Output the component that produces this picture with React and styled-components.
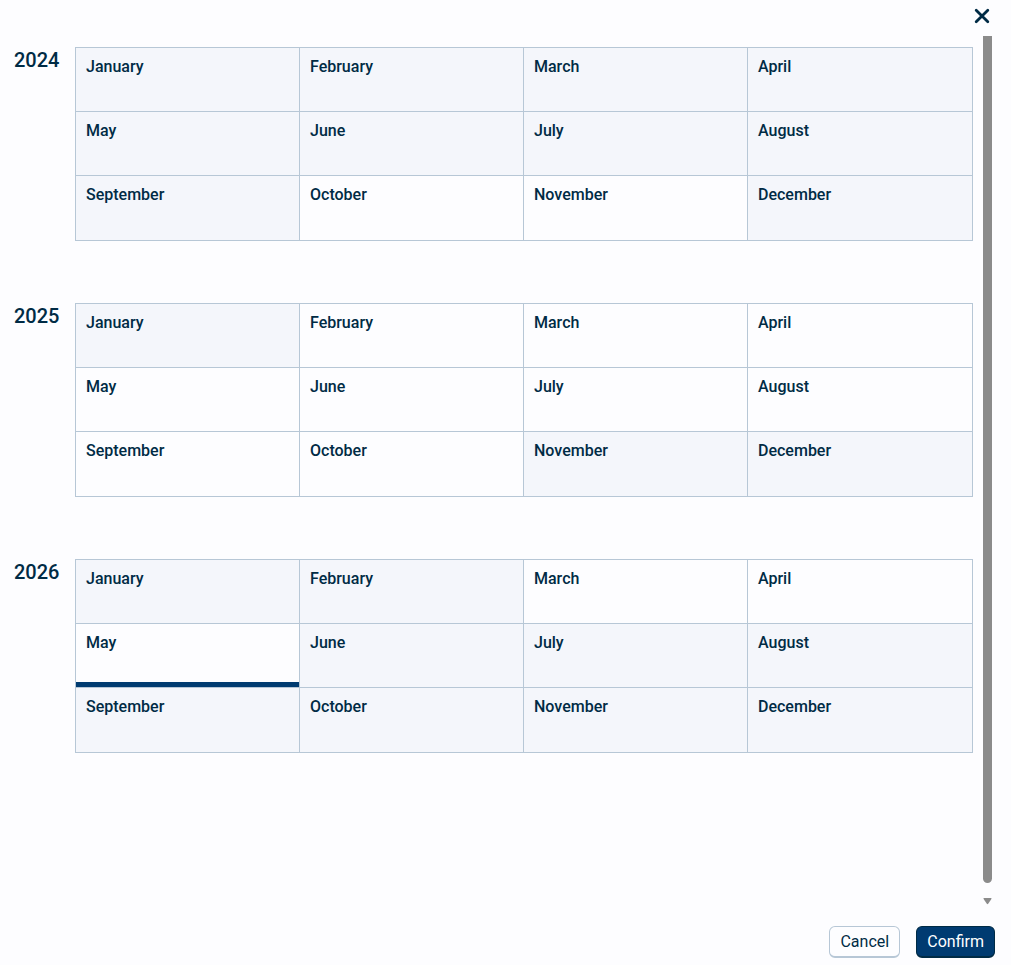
import React, { useState } from "react";
import styled, { createGlobalStyle } from "styled-components";

const ink = "#002b45";
const navy = "#003b71";
const line = "#b7c7d6";
const page = "#fdfdff";

const GlobalStyle = createGlobalStyle`
  *, *::before, *::after { box-sizing: border-box; }
  body {
    margin: 0;
    background: ${page};
    color: ${ink};
    font-family: Roboto, "Liberation Sans", sans-serif;
    font-size: 16px;
  }
  button { font: inherit; color: inherit; }
`;

const Dialog = styled.main`
  display: flex;
  flex-direction: column;
  min-height: 100vh;
`;

const Header = styled.header`
  display: flex;
  justify-content: flex-end;
  height: 36px;
  padding: 4px 17px 0 0;
`;

const CloseButton = styled.button`
  display: flex;
  align-items: center;
  justify-content: center;
  width: 24px;
  height: 24px;
  padding: 0;
  border: 0;
  background: transparent;
  cursor: pointer;
`;

const Body = styled.div`
  display: flex;
  flex: 1;
  gap: 8px;
  padding: 0 17px 0 14px;
`;

const Years = styled.div`
  display: flex;
  flex: 1;
  flex-direction: column;
  gap: 62px;
  padding-top: 11px;
`;

const YearSection = styled.section`
  display: flex;
`;

const YearTitle = styled.h2`
  width: 61px;
  margin: 0;
  font-size: 20px;
  font-weight: 500;
  line-height: 26px;
`;

const MonthGrid = styled.div`
  display: grid;
  flex: 1;
  grid-template-columns: repeat(4, 1fr);
  grid-auto-rows: 64px;
  border: 1px solid ${line};
`;

const Month = styled.button`
  display: flex;
  align-items: flex-start;
  padding: 9px 10px 0;
  border: 0 solid ${line};
  border-right-width: 1px;
  border-bottom-width: 1px;
  background: ${(p) => (p.disabled ? "#f4f6fb" : page)};
  box-shadow: ${(p) => (p.$selected ? `inset 0 -5px 0 ${navy}` : "none")};
  color: ${ink};
  font-weight: 500;
  line-height: 20px;
  text-align: left;
  cursor: ${(p) => (p.disabled ? "default" : "pointer")};

  &:nth-child(4n) { border-right-width: 0; }
  &:nth-child(n + 9) { border-bottom-width: 0; }
`;

const ScrollRail = styled.div`
  display: flex;
  flex-direction: column;
  align-items: center;
  width: 13px;
  padding-bottom: 5px;
`;

const ScrollThumb = styled.div`
  flex: 1;
  width: 9px;
  margin-bottom: 15px;
  border-radius: 0 0 5px 5px;
  background: #8b8b8b;
`;

const Footer = styled.footer`
  display: flex;
  justify-content: flex-end;
  gap: 16px;
  padding: 16px 16px 7px;
`;

const Action = styled.button`
  min-width: 71px;
  height: 32px;
  padding: 0 10px;
  border: 1px solid ${(p) => (p.$primary ? ink : line)};
  border-bottom-width: 2px;
  border-radius: 6px;
  background: ${(p) => (p.$primary ? navy : page)};
  color: ${(p) => (p.$primary ? "#ffffff" : ink)};
  line-height: 20px;
  cursor: pointer;
`;

const monthNames = [
  "January", "February", "March", "April", "May", "June",
  "July", "August", "September", "October", "November", "December",
];

// Indexes of the months that can be chosen in each year
const years = [
  { year: 2024, open: [9, 10] },
  { year: 2025, open: [1, 2, 3, 4, 5, 6, 7, 8, 9] },
  { year: 2026, open: [2, 3, 4] },
];

export default function App() {
  const [selected, setSelected] = useState("2026-4");

  return (
    <>
      <GlobalStyle />
      <Dialog>
        <Header>
          <CloseButton type="button" aria-label="Close">
            <svg width="16" height="16" viewBox="0 0 16 16" fill="none" stroke={ink} strokeWidth="2.8" strokeLinecap="round">
              <path d="M2.2 2.2 13.8 13.8M13.8 2.2 2.2 13.8" />
            </svg>
          </CloseButton>
        </Header>
        <Body>
          <Years>
            {years.map(({ year, open }) => (
              <YearSection key={year} aria-labelledby={`year-${year}`}>
                <YearTitle id={`year-${year}`}>{year}</YearTitle>
                <MonthGrid>
                  {monthNames.map((name, i) => {
                    const key = `${year}-${i}`;
                    return (
                      <Month
                        key={name}
                        type="button"
                        disabled={!open.includes(i)}
                        $selected={selected === key}
                        aria-pressed={selected === key}
                        onClick={() => setSelected(key)}
                      >
                        {name}
                      </Month>
                    );
                  })}
                </MonthGrid>
              </YearSection>
            ))}
          </Years>
          <ScrollRail aria-hidden="true">
            <ScrollThumb />
            <svg width="9" height="7" viewBox="0 0 9 7" fill="#8b8b8b">
              <path d="M.9 0h7.2q.7.2.3.9L5.2 5.8q-.7.8-1.4 0L.6.9Q.2.2.9 0Z" />
            </svg>
          </ScrollRail>
        </Body>
        <Footer>
          <Action type="button">Cancel</Action>
          <Action type="button" $primary>Confirm</Action>
        </Footer>
      </Dialog>
    </>
  );
}
